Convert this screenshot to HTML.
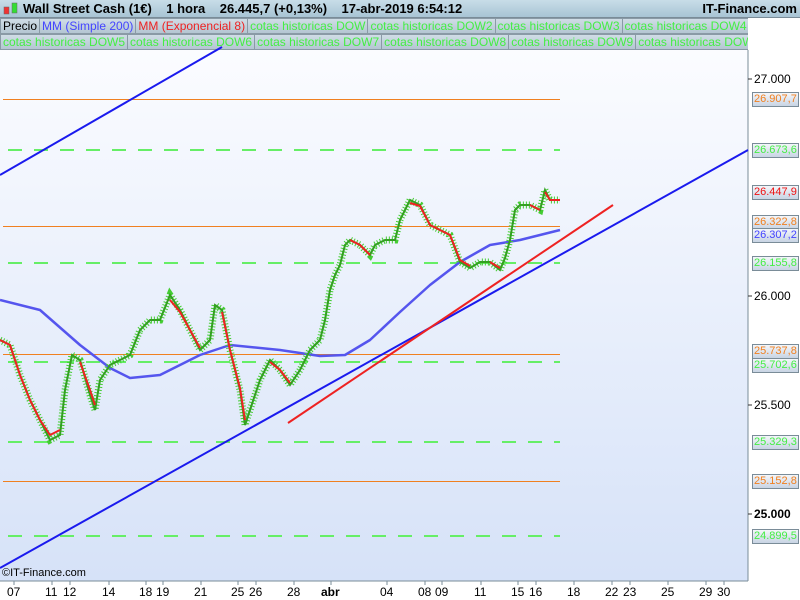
<!DOCTYPE html>
<html><head><meta charset="utf-8"><style>
body{margin:0;width:800px;height:600px;overflow:hidden;background:#fff;font-family:"Liberation Sans",sans-serif;position:relative}
.hdr{position:absolute;left:0;top:0;width:800px;height:17px;background:linear-gradient(#c8dde8,#a8c4d4);border-bottom:1px solid #7a8c98;font-size:13px;font-weight:bold;line-height:17px}
.tabs{position:absolute;left:0;width:748px;height:16px;font-size:12px;line-height:15px;white-space:nowrap;overflow:hidden}
.tabs span{display:inline-block;border:1px solid #8a9aa6;background:linear-gradient(#d0dde6,#b4c6d2);padding:0 2px;margin-right:-1px;color:#44ee44;height:14px}
.lab{position:absolute;left:752px;width:44px;height:13px;border:1px solid #7a8c98;background:linear-gradient(#f4f6fa,#c8d4e4);font-size:11px;line-height:13px;text-align:left;padding-left:1px;box-sizing:content-box;overflow:hidden;white-space:nowrap}
.ax{position:absolute;left:754px;font-size:12px}
.dt{position:absolute;top:585px;font-size:12px}
</style></head><body>
<div class="hdr"><svg width="20" height="17" style="position:absolute;left:2px;top:0"><rect x="2" y="7" width="5" height="7" fill="#e33" stroke="#666" stroke-width=".5"/><rect x="10" y="3" width="5" height="10" fill="#3d3" stroke="#666" stroke-width=".5"/></svg>
<span style="position:absolute;left:23px">Wall Street Cash (1€)&nbsp;&nbsp;&nbsp; 1 hora&nbsp;&nbsp;&nbsp; 26.445,7 (+0,13%)&nbsp;&nbsp;&nbsp; 17-abr-2019 6:54:12</span>
<span style="position:absolute;right:3px">IT-Finance.com</span></div>
<div class="tabs" style="top:18px"><span style="color:#000">Precio</span><span style="color:#4444ff">MM (Simple 200)</span><span style="color:#ee2222">MM (Exponencial 8)</span><span>cotas historicas DOW</span><span>cotas historicas DOW2</span><span>cotas historicas DOW3</span><span>cotas historicas DOW4</span></div>
<div class="tabs" style="top:34px;width:748px"><span>cotas historicas DOW5</span><span>cotas historicas DOW6</span><span>cotas historicas DOW7</span><span>cotas historicas DOW8</span><span>cotas historicas DOW9</span><span>cotas historicas DOW10</span><span>cotas historicas</span></div>
<svg width="800" height="600" style="position:absolute;left:0;top:0">
<defs><linearGradient id="g" x1="0" y1="0" x2="0" y2="1"><stop offset="0" stop-color="#fbfcff"/><stop offset="1" stop-color="#d6e2f8"/></linearGradient></defs>
<rect x="0" y="50" width="748" height="531" fill="url(#g)"/>
<line x1="748" y1="50" x2="748" y2="581" stroke="#7a8c98"/>
<line x1="0" y1="581" x2="748" y2="581" stroke="#7a8c98"/>
<g stroke="#f08020" stroke-width="1"><line x1="3" y1="99.5" x2="560" y2="99.5"/><line x1="3" y1="226.5" x2="560" y2="226.5"/><line x1="3" y1="354.5" x2="560" y2="354.5"/><line x1="3" y1="481.5" x2="560" y2="481.5"/></g>
<g stroke="#66ee66" stroke-width="2" stroke-dasharray="14,12"><line x1="8" y1="150" x2="560" y2="150"/><line x1="8" y1="263" x2="560" y2="263"/><line x1="8" y1="362" x2="560" y2="362"/><line x1="8" y1="442" x2="560" y2="442"/><line x1="8" y1="536" x2="560" y2="536"/></g>
<polyline fill="none" stroke="#5555ee" stroke-width="2.5" stroke-linejoin="round" points="0,300 40,310 80,345 110,368 130,378 160,375 200,355 230,345 280,350 320,356 345,355 370,340 400,312 430,285 460,262 490,245 520,240 560,230"/>
<polyline fill="none" stroke="#44cc33" stroke-width="7" stroke-dasharray="1,2" points="0,340 10,345 20,375 30,400 40,420 50,440 60,435 65,390 72,355 80,360 90,395 95,410 100,380 110,365 120,360 130,355 140,330 150,320 160,320 170,295 180,310 190,330 200,350 210,340 215,305 222,310 230,350 240,390 245,425 250,410 260,380 270,360 280,370 290,385 300,370 310,350 320,340 325,320 330,290 335,275 340,265 345,245 350,240 360,245 370,255 375,245 385,240 395,240 400,220 405,210 410,200 420,205 430,225 440,230 450,235 460,262 470,268 480,262 490,262 500,270 505,258 510,240 515,210 520,205 530,205 540,210 545,190 550,200 560,200"/>
<polyline fill="none" stroke="#33a020" stroke-width="2" points="0,340 10,345 20,375 30,400 40,420 50,440 60,435 65,390 72,355 80,360 90,395 95,410 100,380 110,365 120,360 130,355 140,330 150,320 160,320 170,295 180,310 190,330 200,350 210,340 215,305 222,310 230,350 240,390 245,425 250,410 260,380 270,360 280,370 290,385 300,370 310,350 320,340 325,320 330,290 335,275 340,265 345,245 350,240 360,245 370,255 375,245 385,240 395,240 400,220 405,210 410,200 420,205 430,225 440,230 450,235 460,262 470,268 480,262 490,262 500,270 505,258 510,240 515,210 520,205 530,205 540,210 545,190 550,200 560,200"/>
<polyline fill="none" stroke="#ee2222" stroke-width="2" points="0,340 10,345 20,375 30,400 40,420 50,435 60,430"/>
<polyline fill="none" stroke="#ee2222" stroke-width="2" points="80,362 90,390 95,405"/>
<polyline fill="none" stroke="#ee2222" stroke-width="2" points="170,300 180,312 190,330 200,348"/>
<polyline fill="none" stroke="#ee2222" stroke-width="2" points="222,312 230,350 240,388 245,420"/>
<polyline fill="none" stroke="#ee2222" stroke-width="2" points="270,362 280,370 290,383"/>
<polyline fill="none" stroke="#ee2222" stroke-width="2" points="350,240 360,245 370,255"/>
<polyline fill="none" stroke="#ee2222" stroke-width="2" points="410,203 420,206 430,225 440,230 450,235 460,260 470,266"/>
<polyline fill="none" stroke="#ee2222" stroke-width="2" points="490,262 500,268"/>
<polyline fill="none" stroke="#ee2222" stroke-width="2" points="530,205 540,210"/>
<polyline fill="none" stroke="#ee2222" stroke-width="2" points="545,192 550,200 560,200"/>
<line x1="0" y1="175" x2="222" y2="47" stroke="#1a1aee" stroke-width="2"/>
<line x1="0" y1="568" x2="748" y2="150" stroke="#1a1aee" stroke-width="2"/>
<line x1="288" y1="423" x2="613" y2="205" stroke="#ee2222" stroke-width="2"/>
<g stroke="#333"><line x1="748" y1="79" x2="752" y2="79"/><line x1="748" y1="296" x2="752" y2="296"/><line x1="748" y1="405" x2="752" y2="405"/><line x1="748" y1="514" x2="752" y2="514"/></g>
<g stroke="#7a8c98">
<line x1="14" y1="581" x2="14" y2="585"/><line x1="52" y1="581" x2="52" y2="585"/><line x1="70" y1="581" x2="70" y2="585"/><line x1="109" y1="581" x2="109" y2="585"/><line x1="146" y1="581" x2="146" y2="585"/><line x1="163" y1="581" x2="163" y2="585"/><line x1="201" y1="581" x2="201" y2="585"/><line x1="238" y1="581" x2="238" y2="585"/><line x1="256" y1="581" x2="256" y2="585"/><line x1="294" y1="581" x2="294" y2="585"/><line x1="331" y1="581" x2="331" y2="585"/><line x1="387" y1="581" x2="387" y2="585"/><line x1="425" y1="581" x2="425" y2="585"/><line x1="442" y1="581" x2="442" y2="585"/><line x1="481" y1="581" x2="481" y2="585"/><line x1="518" y1="581" x2="518" y2="585"/><line x1="536" y1="581" x2="536" y2="585"/><line x1="574" y1="581" x2="574" y2="585"/><line x1="612" y1="581" x2="612" y2="585"/><line x1="630" y1="581" x2="630" y2="585"/><line x1="668" y1="581" x2="668" y2="585"/><line x1="706" y1="581" x2="706" y2="585"/><line x1="724" y1="581" x2="724" y2="585"/></g>
</svg>
<div style="position:absolute;left:2px;top:567px;font-size:11px">©IT-Finance.com</div>
<div class="ax" style="top:72px">27.000</div>
<div class="ax" style="top:289px">26.000</div>
<div class="ax" style="top:398px">25.500</div>
<div class="ax" style="top:507px;font-weight:bold">25.000</div>
<div class="lab" style="top:92px;color:#f08020">26.907,7</div>
<div class="lab" style="top:143px;color:#44ee44">26.673,6</div>
<div class="lab" style="top:185px;color:#ee1111">26.447,9</div>
<div class="lab" style="top:215px;color:#f08020">26.322,8</div>
<div class="lab" style="top:228px;color:#4444ff">26.307,2</div>
<div class="lab" style="top:256px;color:#44ee44">26.155,8</div>
<div class="lab" style="top:344px;color:#f08020">25.737,8</div>
<div class="lab" style="top:358px;color:#44ee44">25.702,6</div>
<div class="lab" style="top:435px;color:#44ee44">25.329,3</div>
<div class="lab" style="top:474px;color:#f08020">25.152,8</div>
<div class="lab" style="top:529px;color:#44ee44">24.899,5</div>
<div class="dt" style="left:7px">07</div><div class="dt" style="left:45px">11</div><div class="dt" style="left:63px">12</div><div class="dt" style="left:102px">14</div><div class="dt" style="left:139px">18</div><div class="dt" style="left:156px">19</div><div class="dt" style="left:194px">21</div><div class="dt" style="left:231px">25</div><div class="dt" style="left:249px">26</div><div class="dt" style="left:287px">28</div><div class="dt" style="left:321px;font-weight:bold">abr</div><div class="dt" style="left:380px">04</div><div class="dt" style="left:418px">08</div><div class="dt" style="left:435px">09</div><div class="dt" style="left:474px">11</div><div class="dt" style="left:511px">15</div><div class="dt" style="left:529px">16</div><div class="dt" style="left:567px">18</div><div class="dt" style="left:605px">22</div><div class="dt" style="left:623px">23</div><div class="dt" style="left:661px">25</div><div class="dt" style="left:699px">29</div><div class="dt" style="left:717px">30</div>
</body></html>
